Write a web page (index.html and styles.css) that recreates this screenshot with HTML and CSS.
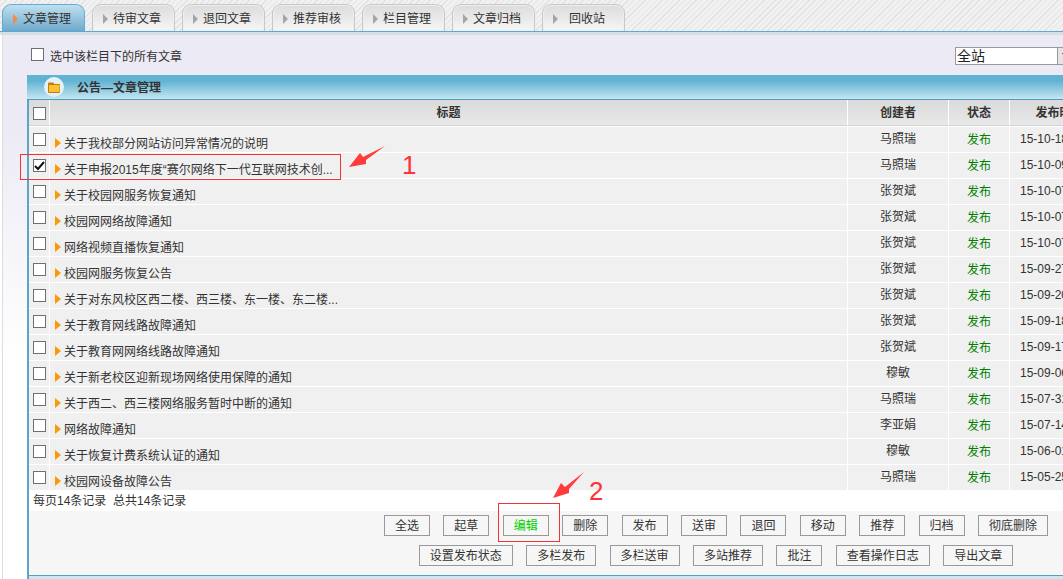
FILE: index.html
```html
<!DOCTYPE html>
<html lang="zh-CN">
<head>
<meta charset="utf-8">
<title>文章管理</title>
<link rel="stylesheet" href="styles.css">
</head>
<body>
<nav class="tabs">
  <a class="tab active"><i class="tri"></i>文章管理</a>
  <a class="tab"><i class="tri"></i>待审文章</a>
  <a class="tab"><i class="tri"></i>退回文章</a>
  <a class="tab"><i class="tri"></i>推荐审核</a>
  <a class="tab"><i class="tri"></i>栏目管理</a>
  <a class="tab"><i class="tri"></i>文章归档</a>
  <a class="tab recycle"><i class="tri"></i>回收站</a>
</nav>
<div class="band"></div>
<main class="content">
  <div class="filter">
    <label class="all"><span class="cb"></span>选中该栏目下的所有文章</label>
    <div class="select"><span class="select-val">全站</span><span class="select-btn"></span></div>
  </div>
  <section class="panel">
    <header class="panel-head">
      <svg class="folder" width="20" height="20" viewBox="0 0 20 20">
        <circle cx="10" cy="10" r="10" fill="#e3f2f8"/>
        <path d="M4 6.500a1 1 0 0 1 1-1h4l1.500 1.500h4.500a1 1 0 0 1 1 1V15a1 1 0 0 1-1 1H5a1 1 0 0 1-1-1z" fill="#c77a12"/>
        <rect x="5" y="8" width="10.500" height="7" fill="#f9c42e"/>
      </svg>
      <h2>公告—文章管理</h2>
    </header>
    <table class="grid">
      <colgroup>
        <col class="c-cb"><col class="c-title"><col class="c-user"><col class="c-state"><col class="c-date"><col>
      </colgroup>
      <thead>
        <tr><th><span class="cb"></span></th><th>标题</th><th>创建者</th><th>状态</th><th>发布时间</th><th></th></tr>
      </thead>
      <tbody>
        <tr><td class="pick"><span class="cb"></span></td><td class="title"><i class="mark"></i>关于我校部分网站访问异常情况的说明</td><td class="user">马照瑞</td><td class="state">发布</td><td class="date">15-10-18</td><td></td></tr>
        <tr><td class="pick"><span class="cb"><svg width="11" height="11" viewBox="0 0 11 11"><path d="M1 6l3 3 6-7" fill="none" stroke="#111" stroke-width="2"/></svg></span></td><td class="title"><i class="mark"></i>关于申报2015年度“赛尔网络下一代互联网技术创...</td><td class="user">马照瑞</td><td class="state">发布</td><td class="date">15-10-09</td><td></td></tr>
        <tr><td class="pick"><span class="cb"></span></td><td class="title"><i class="mark"></i>关于校园网服务恢复通知</td><td class="user">张贺斌</td><td class="state">发布</td><td class="date">15-10-07</td><td></td></tr>
        <tr><td class="pick"><span class="cb"></span></td><td class="title"><i class="mark"></i>校园网网络故障通知</td><td class="user">张贺斌</td><td class="state">发布</td><td class="date">15-10-07</td><td></td></tr>
        <tr><td class="pick"><span class="cb"></span></td><td class="title"><i class="mark"></i>网络视频直播恢复通知</td><td class="user">张贺斌</td><td class="state">发布</td><td class="date">15-10-07</td><td></td></tr>
        <tr><td class="pick"><span class="cb"></span></td><td class="title"><i class="mark"></i>校园网服务恢复公告</td><td class="user">张贺斌</td><td class="state">发布</td><td class="date">15-09-27</td><td></td></tr>
        <tr><td class="pick"><span class="cb"></span></td><td class="title"><i class="mark"></i>关于对东风校区西二楼、西三楼、东一楼、东二楼...</td><td class="user">张贺斌</td><td class="state">发布</td><td class="date">15-09-20</td><td></td></tr>
        <tr><td class="pick"><span class="cb"></span></td><td class="title"><i class="mark"></i>关于教育网线路故障通知</td><td class="user">张贺斌</td><td class="state">发布</td><td class="date">15-09-18</td><td></td></tr>
        <tr><td class="pick"><span class="cb"></span></td><td class="title"><i class="mark"></i>关于教育网网络线路故障通知</td><td class="user">张贺斌</td><td class="state">发布</td><td class="date">15-09-17</td><td></td></tr>
        <tr><td class="pick"><span class="cb"></span></td><td class="title"><i class="mark"></i>关于新老校区迎新现场网络使用保障的通知</td><td class="user">穆敏</td><td class="state">发布</td><td class="date">15-09-06</td><td></td></tr>
        <tr><td class="pick"><span class="cb"></span></td><td class="title"><i class="mark"></i>关于西二、西三楼网络服务暂时中断的通知</td><td class="user">马照瑞</td><td class="state">发布</td><td class="date">15-07-31</td><td></td></tr>
        <tr><td class="pick"><span class="cb"></span></td><td class="title"><i class="mark"></i>网络故障通知</td><td class="user">李亚娟</td><td class="state">发布</td><td class="date">15-07-14</td><td></td></tr>
        <tr><td class="pick"><span class="cb"></span></td><td class="title"><i class="mark"></i>关于恢复计费系统认证的通知</td><td class="user">穆敏</td><td class="state">发布</td><td class="date">15-06-01</td><td></td></tr>
        <tr><td class="pick"><span class="cb"></span></td><td class="title"><i class="mark"></i>校园网设备故障公告</td><td class="user">马照瑞</td><td class="state">发布</td><td class="date">15-05-25</td><td></td></tr>
      </tbody>
    </table>
    <div class="count">每页14条记录&nbsp; 总共14条记录</div>
    <div class="actions">
      <div class="btn-row">
        <button class="btn">全选</button><button class="btn">起草</button><button class="btn on">编辑</button><button class="btn">删除</button><button class="btn">发布</button><button class="btn">送审</button><button class="btn">退回</button><button class="btn">移动</button><button class="btn">推荐</button><button class="btn">归档</button><button class="btn">彻底删除</button>
      </div>
      <div class="btn-row">
        <button class="btn">设置发布状态</button><button class="btn">多栏发布</button><button class="btn">多栏送审</button><button class="btn">多站推荐</button><button class="btn">批注</button><button class="btn">查看操作日志</button><button class="btn">导出文章</button>
      </div>
    </div>
    <div class="panel-foot"></div>
  </section>
</main>
<svg class="marks" width="1063" height="579" viewBox="0 0 1063 579">
  <rect x="20.500" y="154.500" width="320" height="25" fill="none" stroke="#f33333"/>
  <rect x="498.500" y="503.500" width="61" height="38" fill="none" stroke="#f33333"/>
  <path d="M349 167L360 153L363 157L385 146L366 160L366 164z" fill="#ff3b3b"/>
  <path d="M553 498L561 483L565 487L584 472L569 489L569 493z" fill="#ff3b3b"/>
</svg>
<span class="num num-one">1</span>
<span class="num num-two">2</span>
</body>
</html>
```
FILE: styles.css
```css
* { box-sizing: border-box; }
html, body { margin: 0; padding: 0; height: 579px; overflow: hidden; }
body {
  position: relative;
  width: 1063px;
  background: #fff;
  color: #333;
  font: 12px/14px "Liberation Sans", "Noto Sans CJK SC", sans-serif;
}
.tabs {
  display: flex;
  gap: 7px;
  height: 32px;
  padding: 4px 0 0 2px;
  border-bottom: 1px solid #5fa8d3;
  background-color: #eee;
  background-image: repeating-linear-gradient(135deg, #e2e2e2 0 1px, #f1f1f1 1px 4px);
}
.tab {
  display: flex;
  align-items: center;
  width: 83px;
  height: 27px;
  padding: 2px 0 0 10px;
  border: 1px solid #c8c8c8;
  border-bottom: 0;
  border-radius: 9px 9px 0 0;
  background: linear-gradient(#dcdcdc, #f6f6f6);
  box-shadow: inset 0 0 0 1px #eee;
}
.tab.active {
  border-color: #62acd8;
  background: linear-gradient(#bfe0ef, #6fa9cb);
  box-shadow: none;
}
.tri {
  width: 0;
  height: 0;
  margin-right: 5px;
  border-left: 5px solid #a5a5a5;
  border-top: 5px solid transparent;
  border-bottom: 5px solid transparent;
}
.active .tri { border-left-color: #f68a45; }
.recycle .tri { margin-right: 11px; }
.band { height: 3px; background: #d5dfe6; }
.content {
  height: 544px;
  margin-left: 2px;
  padding: 12px 0 0 24px;
  border-left: 1px solid #ddd;
  background: linear-gradient(#eceaf4 0, #ecebf5 90px, #fff 330px);
}
.filter {
  display: flex;
  align-items: flex-start;
  height: 18px;
  margin-bottom: 10px;
}
.all {
  display: flex;
  flex: none;
  align-items: flex-start;
  gap: 6px;
  width: 924px;
  height: 18px;
  margin-left: 4px;
  padding-top: 3px;
}
.all .cb { margin-top: -2px; }
.select {
  display: flex;
  flex: none;
  width: 120px;
  height: 18px;
  border: 1px solid #999;
  background: #fff;
}
.select-val { width: 101px; padding-left: 1px; line-height: 16px; color: #222; font-size: 14px; }
.select-btn { flex: none; width: 17px; background: #e4e4e4; border-left: 1px solid #999; position: relative; }
.select-btn::after {
  content: "";
  position: absolute;
  left: 4px;
  top: 5px;
  border: 3px solid transparent;
  border-top: 4px solid #111;
}
.cb {
  position: relative;
  display: block;
  flex: none;
  width: 13px;
  height: 13px;
  border: 1px solid #6f6f6f;
  background: #fff;
}
.cb svg { display: block; }
.panel {
  width: 1376px;
  border-left: 2px solid #5ea4c6;
  background: #f6f6f6;
}
.panel-head {
  display: flex;
  align-items: center;
  height: 25px;
  margin-left: -2px;
  padding: 1px 0 0 17px;
  border-bottom: 1px solid #4a9fc0;
  border-radius: 4px 0 0 0;
  background: linear-gradient(#5fb3d3 0, #62b3d2 25%, #c6e6f2 100%);
}
.folder { display: block; flex: none; margin-top: -1px; }
.panel-head h2 { margin: 0 0 0 13px; font-size: 12px; line-height: 14px; font-weight: 700; color: #333; }
.grid {
  width: 100%;
  table-layout: fixed;
  border-collapse: separate;
  border-spacing: 0;
}
.c-cb { width: 21px; }
.c-title { width: 798px; }
.c-user { width: 101px; }
.c-state { width: 61px; }
.c-date { width: 100px; }
.grid th {
  height: 26px;
  padding: 0;
  border-right: 1px solid #fff;
  border-bottom: 1px solid #d2d2d2;
  background: linear-gradient(#dadada, #e8e8e8);
  font-size: 12px;
  font-weight: 700;
  text-align: center;
}
.grid th .cb { margin: 1px 0 0 4px; }
.grid td {
  height: 26px;
  padding: 0;
  border-top: 1px solid #fff;
  border-right: 1px solid #fff;
  background: #f0f0f0;
  vertical-align: top;
}
.grid td.pick { padding: 6px 0 0 4px; }
.grid td.title { padding: 10px 0 0 5px; white-space: nowrap; }
.mark {
  display: inline-block;
  width: 0;
  height: 0;
  margin-right: 3px;
  border-left: 6px solid #f99b05;
  border-top: 5px solid transparent;
  border-bottom: 5px solid transparent;
  vertical-align: 0;
}
.grid td.user { padding-top: 5px; text-align: center; }
.grid td.state { padding-top: 6px; text-align: center; color: #008000; }
.grid td.date { padding: 5px 0 0 10px; }
.count {
  height: 21px;
  padding: 4px 0 0 4px;
  background: #fff;
}
.actions {
  display: flex;
  flex-direction: column;
  gap: 9px;
  height: 64px;
  padding-top: 4px;
}
.btn-row {
  display: flex;
  justify-content: center;
  gap: 13.400px;
  height: 21px;
}
.btn {
  flex: none;
  height: 21px;
  margin: 0;
  padding: 0 10px;
  border: 1px solid #999;
  border-radius: 0;
  background: #f6f6f6;
  color: #333;
  font: 12px/14px "Liberation Sans", "Noto Sans CJK SC", sans-serif;
}
.btn.on { color: #00d000; }
.panel-foot { height: 4px; border-top: 1px solid #5b9dbd; background: #cde7f3; }
.marks { position: absolute; left: 0; top: 0; pointer-events: none; }
.num {
  position: absolute;
  color: #f33;
  font: 26px/26px "Liberation Sans", sans-serif;
}
.num-one { left: 402px; top: 152px; }
.num-two { left: 589px; top: 478px; }
```
